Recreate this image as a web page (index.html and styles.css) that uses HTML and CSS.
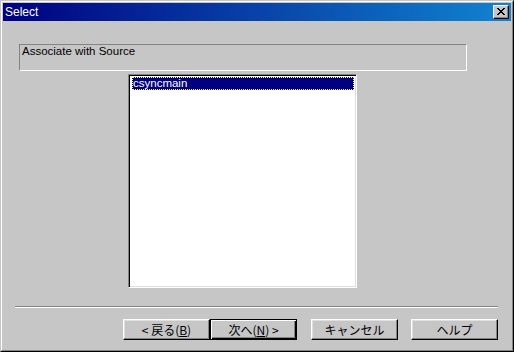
FILE: index.html
```html
<!DOCTYPE html>
<html lang="ja">
<head>
    <meta charset="UTF-8">
    <title>Select</title>
    <link rel="stylesheet" href="styles.css">
</head>
<body>
    <div class="window">
        <div class="frame">
            <div class="titlebar">
                <span class="title">Select</span>
                <span class="close">
                    <svg width="8" height="7" viewBox="0 0 8 7" shape-rendering="crispEdges">
                        <path d="M0 0h2v1h-2zM6 0h2v1h-2zM1 1h2v1h-2zM5 1h2v1h-2zM2 2h4v1h-4zM3 3h2v1h-2zM2 4h4v1h-4zM1 5h2v1h-2zM5 5h2v1h-2zM0 6h2v1h-2zM6 6h2v1h-2z" fill="#000"/>
                    </svg>
                </span>
            </div>
            <div class="content">
                <div class="caption">Associate with Source</div>
                <div class="listbox">
                    <div class="item selected">csyncmain</div>
                </div>
                <div class="separator"></div>
                <div class="buttons">
                    <button class="btn">&lt; 戻る(<u>B</u>)</button>
                    <button class="btn default">次へ(<u>N</u>) &gt;</button>
                    <button class="btn cancel">キャンセル</button>
                    <button class="btn help">ヘルプ</button>
                </div>
            </div>
        </div>
    </div>
</body>
</html>
```

FILE: styles.css
```css
body {
    margin: 0;
    background: #c6c6c6;
    font-family: "Liberation Sans", "Noto Sans CJK JP", sans-serif;
    font-size: 11.5px;
}
.window {
    width: 514px;
    height: 352px;
    box-sizing: border-box;
    border: 1px solid;
    border-color: #c6c6c6 #000 #000 #c6c6c6;
}
.frame {
    height: 100%;
    box-sizing: border-box;
    border: 1px solid;
    border-color: #fff #848484 #848484 #fff;
    padding: 1px;
}
.titlebar {
    height: 18px;
    background: linear-gradient(to right, #000080, #1084d0);
    display: flex;
    align-items: center;
    justify-content: space-between;
    padding: 0 2px 0 2px;
}
.title {
    color: #fff;
    font-size: 12px;
    padding-left: 0;
}
.close {
    width: 16px;
    height: 14px;
    box-sizing: border-box;
    background: #c6c6c6;
    border: 1px solid;
    border-color: #fff #000 #000 #fff;
    box-shadow: inset -1px -1px #848484;
    display: flex;
    align-items: center;
    justify-content: center;
    padding: 0 1px 1px 0;
}
.content {
    display: flex;
    flex-direction: column;
    align-items: flex-start;
}
.caption {
    margin: 23px 0 0 16px;
    width: 448px;
    height: 27px;
    box-sizing: border-box;
    border: 1px solid;
    border-color: #848484 #fff #fff #848484;
    padding: 0 2px;
    line-height: 12px;
}
.listbox {
    margin: 3px 0 0 125px;
    width: 229px;
    height: 214px;
    box-sizing: border-box;
    border: 1px solid;
    border-color: #848484 #fff #fff #848484;
    box-shadow: inset 1px 1px #000, inset -1px -1px #dfdfdf;
    background: #fff;
    padding: 2px 2px 2px 2px;
}
.item {
    height: 13px;
    line-height: 12px;
    padding-left: 1px;
    box-sizing: border-box;
    margin-left: 1px;
}
.selected {
    background: #000080;
    color: #fff;
    outline: 1px dotted #ffff9c;
    outline-offset: -1px;
}
.separator {
    margin: 18px 0 0 12px;
    width: 483px;
    border-top: 1px solid #848484;
    border-bottom: 1px solid #fff;
}
.buttons {
    display: flex;
    margin: 11px 0 0 120px;
}
.btn {
    width: 87px;
    height: 21px;
    box-sizing: border-box;
    background: #c6c6c6;
    border: 1px solid;
    border-color: #fff #000 #000 #fff;
    box-shadow: inset -1px -1px #848484, inset 1px 1px #dfdfdf;
    font-family: "Noto Sans CJK JP", "Liberation Sans", sans-serif;
    font-size: 12px;
    line-height: 17px;
    padding: 0;
    color: #000;
}
.default {
    border: 1px solid #000;
    box-shadow: inset 1px 1px #fff, inset -1px -1px #000, inset -2px -2px #848484;
}
.cancel {
    margin-left: 14px;
}
.help {
    margin-left: 13px;
}
```
